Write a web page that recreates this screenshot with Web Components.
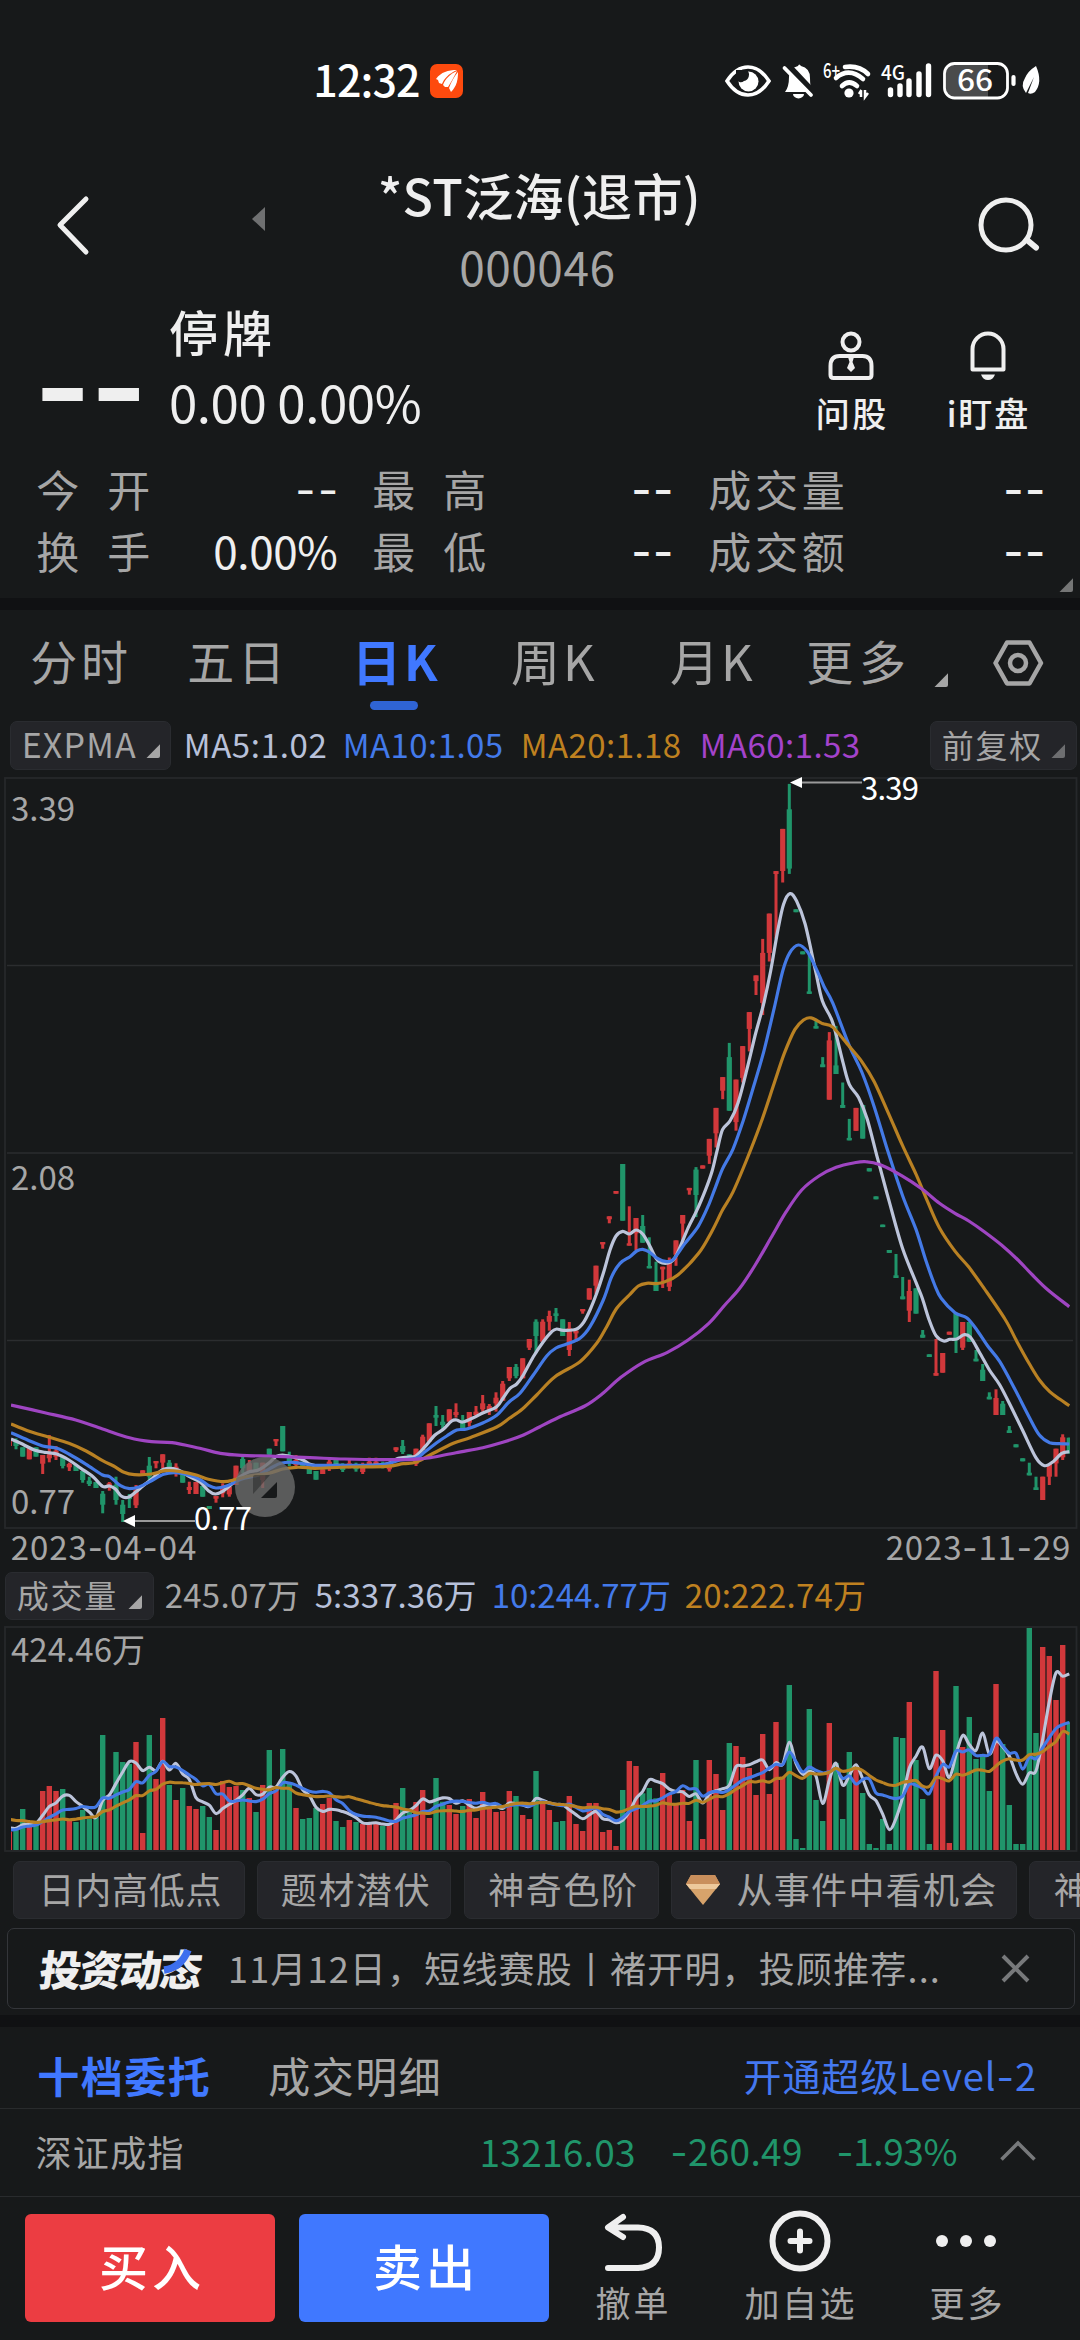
<!DOCTYPE html>
<html lang="zh-CN">
<head>
<meta charset="utf-8">
<title>*ST泛海(退市) 000046</title>
<style>
html,body{margin:0;padding:0;background:#17191a}
body{width:1080px;height:2340px;overflow:hidden;font-family:"Noto Sans CJK SC",sans-serif;color:#efefef}
</style>
</head>
<body>
<stock-app></stock-app>
<script>
const GREY='#a6a6a6', WHITE='#efefef', BLUE='#4078ff', RED='#d1383b', GREEN='#20956a';

/* Single line of text, tracked so that its glyphs span exactly `w` pixels. */
class UiLabel extends HTMLElement{
  connectedCallback(){
    if(this.shadowRoot) return;
    const a=(n,d)=>this.getAttribute(n)||d;
    const size=+a('size',36), w=+a('w',0);
    const root=this.attachShadow({mode:'open'});
    root.innerHTML=`<style>
      :host{display:block;flex:none;white-space:pre;width:${w?w+'px':'auto'};margin-left:${a('ml',0)}px;
        font-size:${size}px;line-height:${a('lh',Math.round(size*1.5))}px;color:${a('color','inherit')};font-weight:${a('weight',400)}}
      span.t{display:inline-block;margin-left:-.04em;transform:translateY(-.06em) ${a('tf','')}}
      i{font-style:normal;font-family:Inter,sans-serif}
    </style><span class="t"></span>`;
    const t=root.querySelector('.t'), txt=this.getAttribute('text');
    txt.split(/(-+)/).forEach(p=>{ if(!p)return;
      if(p[0]==='-'){const i=document.createElement('i');i.textContent=p;t.append(i);} else t.append(p);});
    const n=[...txt].length;
    if(w&&n>1){const nat=t.offsetWidth; t.style.letterSpacing=((w+size*.08-nat)/(n-1)).toFixed(3)+'px';}
  }
}
customElements.define('ui-label',UiLabel);

/* Horizontal bar with a fixed height; children are spaced by their own margins. */
class UiRow extends HTMLElement{
  constructor(){super();this.attachShadow({mode:'open'}).innerHTML='<style>:host{display:flex;align-items:center;box-sizing:border-box;flex:none}</style><slot></slot>';}
  connectedCallback(){this.style.height=this.getAttribute('h')+'px';}
}
customElements.define('ui-row',UiRow);

class UiBand extends HTMLElement{
  constructor(){super();this.attachShadow({mode:'open'}).innerHTML='<style>:host{display:block;height:12px;background:#101113}</style>';}
}
customElements.define('ui-band',UiBand);

class UiCorner extends HTMLElement{
  constructor(){super();this.attachShadow({mode:'open'}).innerHTML=`<style>:host{display:block;flex:none;width:14px;height:14px;color:${GREY}}svg{display:block}</style><svg width="14" height="14"><path d="M14 .3V12a2 2 0 0 1-2 2H.5Z" fill="currentColor"/></svg>`;}
}
customElements.define('ui-corner',UiCorner);

class UiChip extends HTMLElement{
  constructor(){super();this.attachShadow({mode:'open'}).innerHTML='<style>:host{display:flex;align-items:center;box-sizing:border-box;flex:none;background:#242529;border:1px solid #2a2c30;border-radius:7px}</style><slot></slot>';}
}
customElements.define('ui-chip',UiChip);

class StatusBar extends HTMLElement{
  constructor(){super();this.attachShadow({mode:'open'}).innerHTML=`
  <style>:host{display:flex;height:162px;align-items:center;color:#fff}svg{display:block;flex:none;overflow:visible}text{font-family:"Noto Sans CJK SC",sans-serif;font-weight:500}</style>
  <ui-label ml="315" w="104" size="43" weight="500" text="12:32"></ui-label>
  <svg style="margin-left:11px" width="34" height="34" viewBox="0 0 34 34"><rect width="33" height="34" rx="7" fill="#fd4a0e"/><path d="M6 15C11 8 18 6 27 6C18 10 14 15 12 20L9 19L8 16Z" fill="#fff"/><path d="M13 21C15 15 20 10 27 7C24 13 21 18 18 23L15 23Z" fill="#fff"/><path d="M19 24C21 18 24 13 28 8C28 15 27 22 21 28Z" fill="#fff"/></svg>
  <svg style="margin-left:256px" width="325" height="42" viewBox="720 60 325 42" fill="#fff">
    <path d="M727 81Q736 67 748 67T769 81Q760 95 748 95T727 81Z" fill="none" stroke="#fff" stroke-width="3.600"/><circle cx="748.500" cy="81.500" r="10"/><path d="M736 70H747a6.500 6.500 0 0 1 -3 11a5 5 0 0 1-8-2Z" fill="#17191a"/>
    <path d="M785 92Q789 87 789 77Q789 68 798 66Q799 63 801 66Q810 68 810 78Q810 87 812 92Z"/><path d="M793 94h11a5 4 0 0 1-11 0Z"/><path d="M786 63L818 97" stroke="#17191a" stroke-width="6"/><path d="M784.500 68L811 95" stroke="#fff" stroke-width="3.800" stroke-linecap="round"/>
    <text x="823" y="78" font-size="20" textLength="17" lengthAdjust="spacingAndGlyphs">6+</text>
    <g fill="none" stroke="#fff" stroke-width="4.600" stroke-linecap="round"><path d="M845 67Q859 65 868 74M836 78Q849 67 863 79M842 86Q849 79 857 86"/></g><circle cx="849" cy="93" r="4.600"/><path d="M861 97v-6M859 94l2.500-4M865 90v7l3-4" stroke="#fff" stroke-width="2.500" fill="none"/>
    <text x="881" y="80" font-size="20" textLength="24" lengthAdjust="spacingAndGlyphs">4G</text>
    <path d="M890.500 90v4.500M900 86v8.500M909 81v13.500M919 74v20.500M928.500 66v28.500" stroke="#fff" stroke-width="5.400" stroke-linecap="round"/>
    <path d="M955 64h33v33h-33q-9 0-9-9v-15q0-9 9-9" fill="#4a4b4c"/><rect x="944.500" y="63.500" width="63" height="34.500" rx="10" fill="none" stroke="#fff" stroke-width="2.800"/>
    <text x="957" y="91" font-size="29" textLength="36" lengthAdjust="spacingAndGlyphs">66</text>
    <path d="M1013.500 77v7" stroke="#fff" stroke-width="4.200" stroke-linecap="round"/>
    <path d="M1036 66Q1043 82 1035 92Q1031 95 1028 93L1034 77L1026 93Q1020 86 1025 78Q1028 71 1036 66Z"/>
  </svg>`;}
}
customElements.define('status-bar',StatusBar);

class PageHeader extends HTMLElement{
  constructor(){super();this.attachShadow({mode:'open'}).innerHTML=`
  <style>:host{display:flex;height:138px;align-items:center}svg{display:block;flex:none}.c{display:flex;flex-direction:column;width:318px;margin:7px 0 0 114px}</style>
  <svg style="margin:-12px 0 0 54px" width="38" height="64" fill="none" stroke="#efefef" stroke-width="5" stroke-linecap="round" stroke-linejoin="round"><path d="M32 6L6 32L32 59"/></svg>
  <svg style="margin:-24px 0 0 159px" width="15" height="24"><path d="M14 0V24L1 12Z" fill="#6f7071"/></svg>
  <div class="c"><ui-label w="319" size="50" lh="68" weight="500" text="*ST泛海(退市)"></ui-label><ui-label w="152" ml="81" size="46" lh="76" color="${GREY}" text="000046"></ui-label></div>
  <svg style="margin:-13px 0 0 277px" width="68" height="62" fill="none" stroke="#efefef" stroke-width="5" stroke-linecap="round"><circle cx="31" cy="31" r="25"/><path d="M52 46L61 53.500" stroke-width="6"/></svg>`;}
}
customElements.define('page-header',PageHeader);

class QuotePanel extends HTMLElement{
  constructor(){super();
  const row=(a,av,avw,avm,b,c)=>`<ui-row h="62"><ui-label ml="38" w="111" size="43" color="${GREY}" text="${a}"></ui-label><ui-label ml="${avm}" w="${avw}" size="44" text="${av}"></ui-label>
   <ui-label ml="38" w="111" size="43" color="${GREY}" text="${b}"></ui-label><ui-label ml="148" w="39" size="44" weight="500" text="--"></ui-label>
   <ui-label ml="38" w="133" size="43" color="${GREY}" text="${c}"></ui-label><ui-label ml="162" w="39" size="44" weight="500" text="--"></ui-label></ui-row>`;
  this.attachShadow({mode:'open'}).innerHTML=`
  <style>:host{display:flex;flex-direction:column;height:298px}.top{display:flex;height:160px}.big{width:104px;margin-left:39px;padding-top:21px}.mid{margin-left:28px;width:249px;padding-top:2px}
   .act{display:flex;flex-direction:column;align-items:center}.act svg{display:block}.grid{position:relative}.tri{position:absolute;right:7px;bottom:-8px}.tri ui-corner{color:#757676}</style>
  <div class="top"><div class="big"><ui-label w="103" size="123" weight="600" lh="128" text="--"></ui-label></div>
   <div class="mid"><ui-label w="99" size="49" weight="500" lh="64" text="停牌"></ui-label><ui-label w="249" size="51" lh="77" text="0.00 0.00%"></ui-label></div>
   <div class="act" style="margin-left:397px;width:68px;padding-top:30px"><svg width="50" height="52" fill="none" stroke="#efefef" stroke-width="4"><circle cx="25" cy="12" r="8.500"/><path d="M4.500 45V36q0-10 9-10H36.500q9 0 9 10V45q0 3-3 3h-35q-3 0-3-3Z"/><path d="M22 27h6l-1.500 5 2.500 6-4 4-4-4 2.500-6Z" fill="#efefef" stroke="none"/></svg><ui-label w="68" size="34" lh="66" weight="500" text="问股"></ui-label></div>
   <div class="act" style="margin-left:63px;width:79px;padding-top:30px"><svg width="50" height="52" fill="none" stroke="#efefef" stroke-width="4"><path d="M9.500 39.500V19a15.500 15.500 0 0 1 31 0v20.500Z" stroke-linejoin="round"/><path d="M18 44.500h14q-2 5.500-7 5.500t-7-5.500Z" fill="#efefef" stroke="none"/></svg><ui-label w="79" size="34" lh="66" weight="500" text="i盯盘"></ui-label></div>
  </div>
  <div class="grid">${row('今 开','--',39,148,'最 高','成交量')}${row('换 手','0.00%',121,66,'最 低','成交额')}<div class="tri"><ui-corner></ui-corner></div></div>`;}
}
customElements.define('quote-panel',QuotePanel);

class PeriodTabs extends HTMLElement{
  constructor(){super();
  const L=(t,w,ml,x='',s=47)=>`<ui-label text="${t}" w="${w}" ml="${ml}" size="${s}" lh="70" ${x||`color="${GREY}"`}></ui-label>`;
  this.attachShadow({mode:'open'}).innerHTML=`
  <style>:host{display:flex;flex-direction:column;height:105px}.u{width:48px;height:9px;border-radius:5px;background:#2f64d4;margin:-14px 0 0 370px}ui-corner{margin:34px 0 0 30px}svg{display:block;flex:none;margin-left:44px}</style>
  <ui-row h="105">${L('分时',94,32)}${L('五日',94,63)}${L('日K',82,354-283,`color="${BLUE}" weight="700"`,49)}${L('周K',80,77,'',49)}${L('月K',79,79,'',49)}${L('更多',96,57)}<ui-corner></ui-corner>
  <svg width="52" height="50" fill="none" stroke="${GREY}" stroke-width="4.500" stroke-linejoin="round"><path d="M3.500 25L15 4.500H37.500L49 25L37.500 45.500H15Z"/><circle cx="26" cy="25" r="8"/></svg></ui-row><div class="u"></div>`;}
}
customElements.define('period-tabs',PeriodTabs);

class IndicatorBar extends HTMLElement{
  constructor(){super();this.attachShadow({mode:'open'}).innerHTML=`
  <style>:host{display:block;height:60px}ui-chip{height:49px}.d{color:#6d6e70}</style>
  <ui-row h="61"><ui-chip style="width:161px;margin-left:10px"><ui-label ml="12" w="111" size="34" color="${GREY}" text="EXPMA"></ui-label><ui-corner style="margin:11px 0 0 12px"></ui-corner></ui-chip>
  <ui-label ml="14" w="140" size="33" color="#b8c1da" text="MA5:1.02"></ui-label><ui-label ml="19" w="158" size="33" color="#437aea" text="MA10:1.05"></ui-label><ui-label ml="20" w="158" size="33" color="#bf8120" text="MA20:1.18"></ui-label><ui-label ml="21" w="158" size="33" color="#a443cb" text="MA60:1.53"></ui-label>
  <ui-chip style="width:147px;margin-left:71px"><ui-label ml="12" w="97" size="32" color="${GREY}" text="前复权"></ui-label><ui-corner class="d" style="margin:11px 0 0 11px"></ui-corner></ui-chip></ui-row>`;}
}
customElements.define('indicator-bar',IndicatorBar);

const X=i=>9.33+6.6667*i;
/* Catmull-Rom spline through a list of [x,y] points. */
function spline(p){
  let d='M'+p[0][0].toFixed(1)+' '+p[0][1].toFixed(1);
  for(let i=0;i<p.length-1;i++){
    const a=p[i-1]||p[i],b=p[i],c=p[i+1],e=p[i+2]||c;
    const f=n=>n.toFixed(1);
    d+='C'+[b[0]+(c[0]-a[0])/6,b[1]+(c[1]-a[1])/6,c[0]-(e[0]-b[0])/6,c[1]-(e[1]-b[1])/6,c[0],c[1]].map(f).join(' ');
  }
  return d;
}
/* The plot is digitised in four tiles, each with its own origin and scale. */
const TILE={A:[0,1360,2.9037,3],B:[270,1140,3,3],C:[540,760,2.9037,2.8],D:[540,1160,2.9037,3]};
const place=segs=>Object.entries(segs).flatMap(([k,s])=>{const [ox,oy,sx,sy]=TILE[k];return s.trim().split(/\s+/).map(q=>{const [x,y]=q.split(',').map(Number);return [ox+x/sx,oy+y/sy];});});
const LINES=[
['#bcc4da',{A:'32,237 60,250 100,270 130,277 165,282 200,300 235,325 270,350 298,379 318,378 335,387 352,408 372,412 395,395 415,378 440,358 475,328 515,329 550,350 580,365 605,392 625,402 645,395 670,375 700,348 724,335 750,330 780,310 801,290 821,285 850,291 880,300',
B:'120,973 145,978 200,976 280,977 350,972 385,955 415,951 437,948 465,920 495,885 520,868 545,843 560,840 578,846 610,833 640,818 680,800 700,773 720,745 740,732 760,705 790,650 820,605 845,575 860,567 880,571 918,568 940,548 960,510 980,460 1000,400 1020,330 1038,288 1058,274 1078,282 1098,270 1118,282 1138,315',
C:'337,1395 355,1408 380,1405 397,1385 430,1310 455,1262 480,1205 500,1150 515,1090 530,1035 552,1010 575,960 600,870 625,770 650,680 670,590 690,480 707,405 726,374 745,395 770,460 800,590 820,675 850,735 880,848 898,908 925,945 950,1005 980,1115 1015,1240 1053,1368',
D:'1092,368 1110,415 1130,480 1150,527 1172,543 1190,538 1210,537 1232,524 1250,532 1275,575 1305,630 1335,675 1370,745 1400,808 1440,893 1465,917 1490,905 1515,880 1537,875'}],
['#447ae6',{A:'32,218 80,240 124,258 165,265 200,282 250,313 298,345 318,350 350,377 376,386 405,380 440,362 475,343 510,338 550,346 580,358 605,376 627,384 660,377 700,358 750,345 785,325 815,310 850,307 885,312',
B:'135,976 240,976 340,974 390,960 437,955 465,935 500,908 530,888 560,870 590,867 640,848 680,826 718,785 750,760 790,705 830,648 858,624 890,612 930,595 960,560 1000,480 1025,410 1050,370 1080,350 1100,333 1118,328 1138,336',
C:'337,1393 360,1403 385,1400 420,1355 460,1305 490,1245 510,1195 530,1145 560,1090 590,1010 620,915 650,815 680,695 705,590 725,540 750,518 775,535 800,580 825,635 850,680 898,800 935,875 970,970 1010,1095 1053,1220 1092,1315',
D:'1120,300 1145,372 1165,415 1205,458 1240,474 1270,512 1300,558 1335,605 1380,690 1420,770 1450,825 1480,848 1510,851 1537,852'}],
['#b98123',{A:'32,192 80,212 143,232 200,250 250,273 298,302 330,318 360,337 390,344 440,342 480,332 520,334 570,345 605,358 650,365 685,358 724,348 780,340 821,327 860,322 895,323',
B:'135,985 240,981 350,979 400,971 437,967 480,945 550,910 600,893 680,861 718,835 758,806 800,765 855,710 930,665 980,610 1010,560 1040,505 1078,465 1105,438 1130,430',
C:'337,1466 360,1462 400,1442 460,1382 500,1318 530,1260 560,1210 600,1120 640,1020 680,905 710,820 740,755 765,728 787,722 820,738 850,748 898,802 935,845 970,900 1010,985 1053,1080 1092,1160 1125,1235 1160,1310 1205,1375 1245,1420 1290,1480',
D:'1350,477 1385,545 1420,610 1450,660 1480,695 1510,718 1537,737'}],
['#9f45c2',{A:'32,135 130,158 220,180 298,207 376,233 440,245 500,248 580,265 640,280 700,286 800,289 900,293 1000,297 1100,299 1200,298 1250,293 1324,278 1402,263 1460,247 1520,225',
D:'0,800 55,772 130,738 180,702 235,652 300,607 370,577 430,540 490,490 535,437 580,385 625,315 670,235 715,155 760,90 810,48 860,22 910,9 945,5 990,15 1050,47 1110,88 1160,130 1205,160 1245,183 1290,215 1340,255 1385,297 1430,345 1475,390 1537,440'}]];
/* Candles: index, direction, high, body top, body bottom, low. */
const CANDLES={
A:`0R235,235,258,258 1G235,240,258,268 2G262,262,290,290 3R262,262,298,298 4G262,262,290,290 5R285,285,311,342 6R225,283,295,307 7R258,272,290,300 8G290,290,318,325 9R308,312,322,333 10G315,315,333,333 11G333,333,360,368 12G350,362,372,378 13G366,366,384,384 14G393,401,434,460 15R366,370,378,392 16G350,375,420,434 17G420,434,462,486 18G402,410,415,444 19R375,390,436,444 20R331,331,341,341 21G291,317,350,360 22R303,303,309,325 23R283,283,308,325 24G300,308,325,325 25R310,320,335,350 26G345,345,368,368 27R365,381,390,402 28R366,366,402,402 29G378,378,410,410 30G438,438,447,447 31R408,408,416,428 32R370,378,400,412 33R375,380,403,410 34R317,317,375,375 35G290,297,325,340 36R300,310,335,335 37G308,308,330,330 38R308,308,360,384 39G266,266,284,290 40R237,237,243,258 41G198,198,274,274`,
B:`42G935,945,965,978 43R945,960,975,982 44G965,965,978,985 45G975,980,1002,1002 46G993,993,1019,1019 47R988,988,1002,1002 48R955,965,980,993 49G958,960,975,985 50G970,978,990,996 51R955,970,980,985 52G968,975,988,995 53R968,978,996,1002 54R953,965,978,980 55R953,965,975,978 56G965,970,980,985 57R970,975,988,995 58R922,922,931,936 59G900,918,936,942 60G943,943,955,960 61R926,926,972,978 62R884,890,930,930 63R850,850,905,905 64G798,825,833,858 65G825,845,855,870 66R808,808,845,845 67R790,816,825,833 68G825,848,865,865 69R816,816,848,860 70R798,815,825,830 71R765,790,808,815 72R792,798,812,825 73R757,773,790,815 74R723,731,782,782 75R681,681,715,723 76G672,681,708,715 77R655,655,715,715 78R597,597,623,630 79G538,545,588,640 80R538,545,605,605 81R512,528,545,572 82G504,520,528,545 83G538,538,588,588 84R546,565,630,648 85R565,572,580,605 86R507,507,514,521 87R445,445,479,479 88R377,377,437,462 89R306,306,312,326 90R229,229,238,250 91R153,153,161,161 92G72,72,242,242 93R199,310,317,317 94R234,234,280,330 95G225,258,308,308 96G292,378,385,385 97G365,425,453,453 98R380,380,388,444`,
C:`99R1393,1400,1475,1487 100R1345,1345,1385,1416 101R1274,1274,1298,1355 102R1198,1198,1205,1217 103G1140,1147,1218,1280 104R1135,1135,1144,1144 105R1061,1061,1108,1131 106R974,974,1045,1085 107R888,888,926,950 108G792,832,982,982 109R895,895,1014,1038 110R801,801,890,903 111R706,706,753,816 112R603,603,619,658 113R501,540,680,714 114R430,430,540,564 115R311,311,319,500 116R193,193,311,343 117G67,138,304,319 118G418,418,426,426 119G536,536,544,544 120G545,648,655,655 121G725,745,752,752 122G832,852,860,860 123R762,785,951,951 124G745,855,879,879 125G903,966,974,974 126G1005,1058,1065,1065 127R974,974,1038,1038 128G966,966,1060,1060 129G1143,1143,1152,1152 130G1222,1222,1230,1230 131G1301,1301,1308,1308 132G1372,1372,1380,1380`,
D:`133G282,346,354,354 134G351,409,418,418 135R359,393,452,486 136G385,385,461,461 137G510,524,533,533 138G583,583,591,591 139R537,639,647,647 140R579,579,638,638 141R515,515,524,524 142G460,460,540,579 143R486,486,563,570 144G486,486,545,545 145G570,596,604,604 146G612,629,663,663 147G697,710,718,718 148R688,714,765,765 149G723,731,765,765 150G798,811,819,819 151G853,853,862,862 152G895,895,904,904 153G908,938,946,946 154G950,982,990,990 155R950,950,1020,1020 156R912,912,950,975 157R866,866,910,950 158R823,832,892,900 159G833,833,880,880`};

class KlineChart extends HTMLElement{
  constructor(){super();
  let c='';
  for(const k in CANDLES){const [,oy,,s]=TILE[k];for(const q of CANDLES[k].split(' ')){
    const m=q.match(/^(\d+)([RG])(.*)$/),x=X(+m[1]),[h,t,b,l]=m[3].split(',').map(v=>oy+v/s),f=m[2]==='R'?RED:GREEN;
    c+=`<g fill="${f}"><rect x="${(x-1.5).toFixed(1)}" y="${h.toFixed(1)}" width="3" height="${(l-h).toFixed(1)}"/><rect x="${(x-2.6).toFixed(1)}" y="${t.toFixed(1)}" width="5.2" height="${Math.max(2.4,b-t).toFixed(1)}"/></g>`;}}
  const l=LINES.map(([col,s])=>`<path d="${spline(place(s))}" stroke="${col}"/>`).join('');
  this.attachShadow({mode:'open'}).innerHTML=`
  <style>:host{display:block;height:757px}svg{display:block;overflow:visible}text{font:400 33px "Noto Sans CJK SC",sans-serif;fill:${GREY}}text.w{font-size:31px;fill:#fff}</style>
  <svg width="1080" height="757" viewBox="0 775 1080 757"><defs><clipPath id="p"><rect x="11" y="775" width="1059" height="757"/></clipPath></defs>
  <rect x="5" y="778" width="1071.500" height="750" fill="none" stroke="#26282b" stroke-width="1.800"/>
  <path d="M7 965.500H1073M7 1153H1073M7 1340.500H1073" stroke="#2b2d2f" stroke-width="1.300"/>
  <g clip-path="url(#p)">${c}<g fill="none" stroke-width="3.200" stroke-linejoin="round">${l}</g></g>
  <text x="11" y="821" textLength="64">3.39</text><text x="11" y="1190" textLength="64">2.08</text><text x="11" y="1514" textLength="64">0.77</text>
  <circle cx="265" cy="1487" r="30" fill="#6b6b6b" fill-opacity=".8"/><path d="M277 1482V1496q0 2-2 2H261Z" fill="#17191a"/><path d="M253 1494V1477q0-2 2-2H270Z" fill="#17191a" fill-opacity=".4"/>
  <path d="M801 782.500H862M135 1521H195" stroke="#9a9a9a" stroke-width="2"/><path d="M790 782.500L802 777V788ZM123 1521L135 1515V1527Z" fill="#fff"/>
  <text class="w" x="861" y="800" textLength="58">3.39</text><text class="w" x="194" y="1530" textLength="58">0.77</text></svg>`;}
}
customElements.define('kline-chart',KlineChart);

class VolumeHeader extends HTMLElement{
  constructor(){super();this.attachShadow({mode:'open'}).innerHTML=`
  <style>:host{display:block}ui-chip{height:48px;width:149px;margin-left:5px}</style>
  <ui-row h="34"><ui-label ml="12" w="183" size="33" color="${GREY}" text="2023-04-04"></ui-label><ui-label ml="692" w="182" size="33" color="${GREY}" text="2023-11-29"></ui-label></ui-row>
  <ui-row h="60"><ui-chip><ui-label ml="12" w="97" size="32" color="${GREY}" text="成交量"></ui-label><ui-corner style="margin:11px 0 0 13px"></ui-corner></ui-chip>
  <ui-label ml="12" w="133" size="33" color="${GREY}" text="245.07万"></ui-label><ui-label ml="17" w="159" size="33" color="#b8c1da" text="5:337.36万"></ui-label><ui-label ml="18" w="177" size="33" color="#437aea" text="10:244.77万"></ui-label><ui-label ml="16" w="179" size="33" color="#bf8120" text="20:222.74万"></ui-label></ui-row>`;}
}
customElements.define('volume-header',VolumeHeader);

/* Volume bars, one per candle: direction and distance of the bar's top from the scale origin. */
const VOL=`R815 G810 G747 R790 G790 R693 R678 R693 G687 R780 G786 G750 G777 G768 G525 R705 G576 G606 G612 R546 R819 G525 R657 R474 G675 R720 G684 R738 R747 G738 G771 R810 R663 R681 R678 G690 R714 G756 R675 G570 R690 G567 G670 R744 G777 G774 G744 R732 R714 G783 G801 R780 G786 R792 R792 R792 G798 R790 R729 G684 G755 R726 R690 R774 G654 G725 R735 R762 G738 R717 R774 R696 R747 R756 R753 R693 G708 R765 R777 G633 R720 R750 G786 G783 R708 R792 R813 R729 R729 R816 R810 R858 G690 R603 R618 G700 G684 G715 R639 R700 R735 R690 R783 G600 R837 R600 R642 R750 G549 R558 R591 R624 R705 R522 R702 R486 R650 G375 G837 G864 G447 G720 G783 R489 G609 G777 G576 R620 G699 G852 G864 G777 G852 G531 G534 R426 G600 G717 G852 R333 R510 R849 G378 R561 G471 G597 G588 G693 R372 G552 G735 G852 G852 G204 G519 R261 R288 R420 R255 G485`.split(' ');
class VolumeChart extends HTMLElement{
  constructor(){super();
  const h=VOL.map(v=>870-v.slice(1));
  const all=[...Array(10).fill(132),...Array(5).fill(50),...Array(5).fill(70),...h];
  const bars=VOL.map((v,i)=>`<rect x="${(X(i)-2.7).toFixed(1)}" y="${(1850-h[i]/3).toFixed(1)}" width="5.4" height="${(h[i]/3).toFixed(1)}" fill="${v[0]==='R'?RED:GREEN}"/>`).join('');
  const ma=n=>spline(h.map((_,i)=>{let s=0;for(let j=0;j<n;j++)s+=all[20+i-j];return [X(i),1850-s/n/3];}));
  this.attachShadow({mode:'open'}).innerHTML=`
  <style>:host{display:block;height:228px}svg{display:block;overflow:visible}text{font:400 33px "Noto Sans CJK SC",sans-serif;fill:${GREY}}</style>
  <svg width="1080" height="228" viewBox="0 1626 1080 228"><defs><clipPath id="v"><rect x="11" y="1626" width="1059" height="228"/></clipPath></defs>
  <rect x="5" y="1627" width="1071.500" height="224" fill="none" stroke="#26282b" stroke-width="1.800"/>
  <g clip-path="url(#v)">${bars}<g fill="none" stroke-width="3.100"><path d="${ma(5)}" stroke="#bcc4da"/><path d="${ma(10)}" stroke="#447ae6"/><path d="${ma(20)}" stroke="#b98123"/></g></g>
  <text x="11" y="1662" textLength="134">424.46万</text></svg>`;}
}
customElements.define('volume-chart',VolumeChart);

class ChipBar extends HTMLElement{
  constructor(){super();
  const C=(t,w,tw,p)=>`<ui-chip style="width:${w}px"><ui-label ml="${p}" w="${tw}" size="36" color="${GREY}" text="${t}"></ui-label></ui-chip>`;
  this.attachShadow({mode:'open'}).innerHTML=`
  <style>:host{display:flex;gap:12.300px;padding:7px 0 9px 13px;height:58px;overflow:hidden}ui-chip{height:58px}svg{margin-left:13px;flex:none}</style>
  ${C('日内高低点',232,180,26)}${C('题材潜伏',194,146,24)}${C('神奇色阶',195,146,25)}
  <ui-chip style="width:346px"><svg width="36" height="32"><path d="M6 1H30L35 10L18 31L1 10Z" fill="#d7a36b"/><path d="M6 1H30L35 10H1Z" fill="#c98f5c"/><path d="M1 10H35L31 15H5Z" fill="#edc99c"/></svg><ui-label ml="17" w="257" size="36" color="${GREY}" text="从事件中看机会"></ui-label></ui-chip>
  ${C('神',120,0,25)}`;}
}
customElements.define('chip-bar',ChipBar);

class NewsCard extends HTMLElement{
  constructor(){super();this.attachShadow({mode:'open'}).innerHTML=`
  <style>:host{display:flex;align-items:center;box-sizing:border-box;height:81px;width:1068px;margin:0 0 6px 6.500px;border:1.500px solid #34363a;border-radius:7px}.logo{position:relative;flex:none;width:161px;margin:3px 0 0 34px}.logo svg{position:absolute;left:117px;top:9px}svg{flex:none;display:block}</style>
  <div class="logo"><ui-label w="159" size="42" weight="900" tf="skewX(-7deg)" text="投资动态"></ui-label><svg width="36" height="28"><path d="M29 2Q22 20 5 22" fill="none" stroke="#3d6fee" stroke-width="7.500"/></svg></div>
  <ui-label ml="27" w="709" size="36" color="${GREY}" text="11月12日，短线赛股丨褚开明，投顾推荐..."></ui-label>
  <svg style="margin-left:61px" width="32" height="32"><path d="M3 3L28 28M28 3L3 28" stroke="#77797b" stroke-width="4"/></svg>`;}
}
customElements.define('news-card',NewsCard);

class OrderTabs extends HTMLElement{
  constructor(){super();this.attachShadow({mode:'open'}).innerHTML=`
  <style>:host{display:block}.l{height:1.500px;background:#292b2d;margin-top:-1.500px}svg{display:block}</style>
  <ui-row h="82" style="padding-top:19px"><ui-label ml="39" w="169" size="42" weight="700" color="${BLUE}" text="十档委托"></ui-label><ui-label ml="62" w="169" size="42" color="${GREY}" text="成交明细"></ui-label><ui-label ml="306" w="289" size="38" color="#4478f0" text="开通超级Level-2"></ui-label></ui-row><div class="l"></div>
  <ui-row h="88"><ui-label ml="37" w="145" size="36" color="${GREY}" text="深证成指"></ui-label><ui-label ml="299" w="153" size="37" color="${GREEN}" text="13216.03"></ui-label><ui-label ml="38" w="129" size="37" color="${GREEN}" text="-260.49"></ui-label><ui-label ml="37" w="118" size="37" color="${GREEN}" text="-1.93%"></ui-label>
  <svg style="margin:-5px 0 0 43px" width="38" height="22"><path d="M2.500 19.500L19 3L35.500 19.500" fill="none" stroke="#77797b" stroke-width="3.600"/></svg></ui-row><div class="l"></div>`;}
}
customElements.define('order-tabs',OrderTabs);

class TradeBar extends HTMLElement{
  constructor(){super();this.attachShadow({mode:'open'}).innerHTML=`
  <style>:host{display:flex;height:145px}.b{width:250px;height:108px;margin-top:17px;border-radius:6px;display:flex;align-items:center;justify-content:center;color:#fff}.i{display:flex;flex-direction:column;align-items:center;padding-top:11px}svg{display:block}</style>
  <div class="b" style="margin-left:25px;background:#ec3d42"><ui-label w="98" size="49" weight="500" text="买入"></ui-label></div>
  <div class="b" style="margin-left:24px;background:#4078ff"><ui-label w="98" size="49" weight="500" text="卖出"></ui-label></div>
  <div class="i" style="margin-left:47px;width:72px"><svg width="72" height="66" fill="none" stroke="#efefef" stroke-width="6" stroke-linecap="round" stroke-linejoin="round"><path d="M27 9L12 19.500L27 29M13 19.500H42Q63 20 63 39.500T42 60H12"/></svg><ui-label w="70" size="35" lh="60" color="${GREY}" text="撤单"></ui-label></div>
  <div class="i" style="margin-left:78px;width:107px"><svg width="66" height="66" fill="none" stroke="#efefef" stroke-width="6" stroke-linecap="round"><circle cx="33" cy="33" r="27.500"/><path d="M33 23.500V42.500M23.500 33H42.500"/></svg><ui-label w="107" size="35" lh="60" color="${GREY}" text="加自选"></ui-label></div>
  <div class="i" style="margin-left:77px;width:72px"><svg width="66" height="66" fill="#efefef"><circle cx="9" cy="33" r="6"/><circle cx="33" cy="33" r="6"/><circle cx="57" cy="33" r="6"/></svg><ui-label w="70" size="35" lh="60" color="${GREY}" text="更多"></ui-label></div>`;}
}
customElements.define('trade-bar',TradeBar);

class StockApp extends HTMLElement{
  constructor(){super();this.attachShadow({mode:'open'}).innerHTML=`
  <style>:host{display:flex;flex-direction:column;width:1080px;height:2340px}:host>*{flex:none}</style>
  <status-bar></status-bar><page-header></page-header><quote-panel></quote-panel><ui-band></ui-band><period-tabs></period-tabs><indicator-bar></indicator-bar><kline-chart></kline-chart><volume-header></volume-header><volume-chart></volume-chart><chip-bar></chip-bar><news-card></news-card><ui-band></ui-band><order-tabs></order-tabs><trade-bar></trade-bar>`;}
}
customElements.define('stock-app',StockApp);
</script>
</body>
</html>
